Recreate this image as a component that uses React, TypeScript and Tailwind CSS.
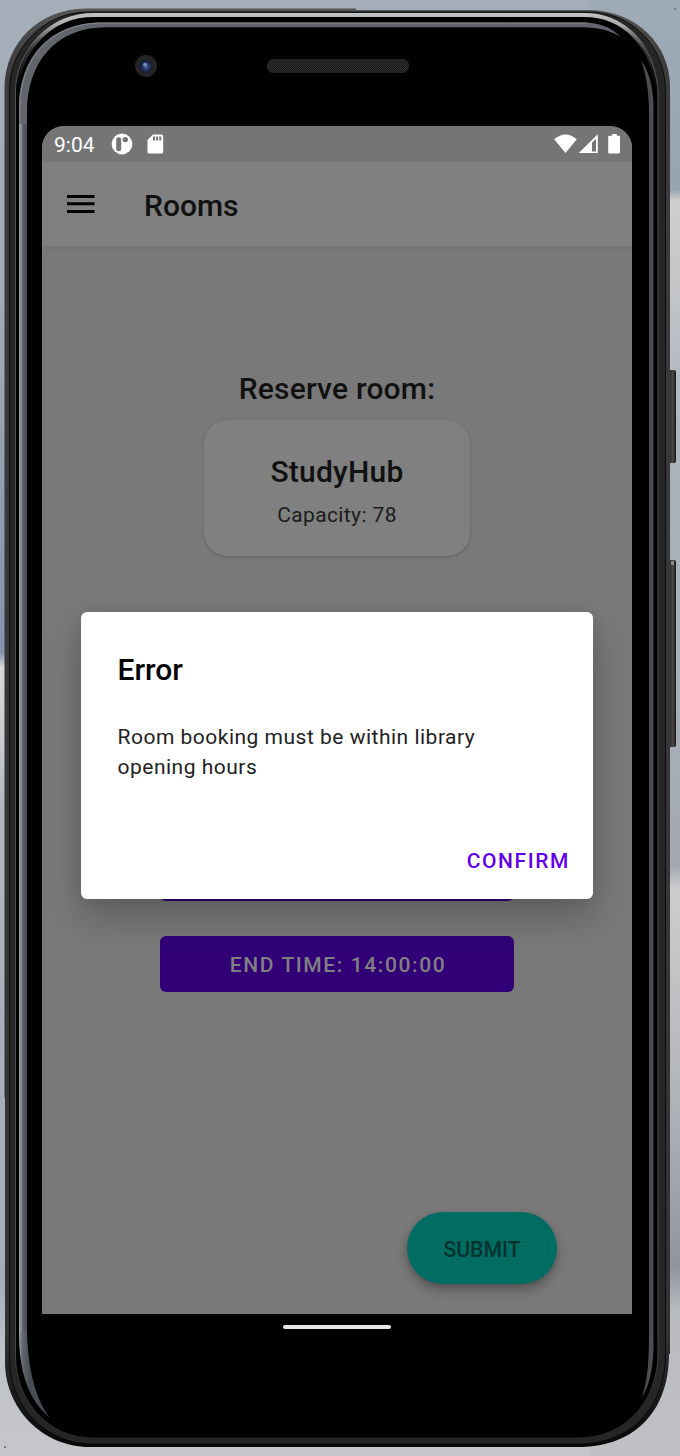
import React from "react";

function Backdrop() {
  return (
    <svg className="absolute inset-0" width="680" height="1456" viewBox="0 0 680 1456" aria-hidden="true">
      <defs>
        <linearGradient id="skyL" x1="0" y1="0" x2="0" y2="1">
          <stop offset="0" stopColor="#a4afba" />
          <stop offset="0.2" stopColor="#a1acb9" />
          <stop offset="0.35" stopColor="#8f9cb0" />
          <stop offset="0.448" stopColor="#8593ad" />
          <stop offset="0.458" stopColor="#d6d7d8" />
          <stop offset="0.51" stopColor="#c9cbce" />
          <stop offset="0.55" stopColor="#b3b8c0" />
          <stop offset="0.7" stopColor="#a9afba" />
          <stop offset="0.88" stopColor="#a5adba" />
          <stop offset="0.93" stopColor="#c0c3c8" />
          <stop offset="1" stopColor="#c4c6ca" />
        </linearGradient>
        <linearGradient id="skyR" x1="0" y1="0" x2="0" y2="1">
          <stop offset="0" stopColor="#9fabb7" />
          <stop offset="0.13" stopColor="#97a3b1" />
          <stop offset="0.138" stopColor="#cfcfce" />
          <stop offset="0.19" stopColor="#c5c7c8" />
          <stop offset="0.24" stopColor="#b8bec5" />
          <stop offset="0.33" stopColor="#a9b1ba" />
          <stop offset="0.45" stopColor="#a8b0bb" />
          <stop offset="0.595" stopColor="#a2a9b2" />
          <stop offset="0.61" stopColor="#cccdce" />
          <stop offset="0.68" stopColor="#c0c1c3" />
          <stop offset="0.76" stopColor="#afb3b8" />
          <stop offset="0.87" stopColor="#8f969f" />
          <stop offset="0.9" stopColor="#b8bbbf" />
          <stop offset="1" stopColor="#c0c1c4" />
        </linearGradient>
        <linearGradient id="rimFade" gradientUnits="userSpaceOnUse" x1="0" y1="12" x2="0" y2="120">
          <stop offset="0" stopColor="#c5c7c9" />
          <stop offset="0.12" stopColor="#aaa" />
          <stop offset="0.35" stopColor="#555" stopOpacity="0.6" />
          <stop offset="0.7" stopColor="#555" stopOpacity="0" />
        </linearGradient>
        <linearGradient id="innerRim" gradientUnits="userSpaceOnUse" x1="0" y1="12" x2="0" y2="1440">
          <stop offset="0" stopColor="#555658" />
          <stop offset="0.92" stopColor="#4c4d4f" />
          <stop offset="0.97" stopColor="#303030" />
          <stop offset="1" stopColor="#262626" />
        </linearGradient>
        <linearGradient id="edge" gradientUnits="userSpaceOnUse" x1="0" y1="8" x2="0" y2="1448">
          <stop offset="0" stopColor="#555" />
          <stop offset="0.04" stopColor="#3d3b3b" />
          <stop offset="0.92" stopColor="#343233" />
          <stop offset="0.97" stopColor="#171717" />
          <stop offset="1" stopColor="#060606" />
        </linearGradient>
        <linearGradient id="side" x1="0" y1="0" x2="1" y2="0">
          <stop offset="0" stopColor="#9da1a6" />
          <stop offset="0.3" stopColor="#858a90" />
          <stop offset="0.45" stopColor="#5c6269" />
          <stop offset="1" stopColor="#484e56" />
        </linearGradient>
        <linearGradient id="tail" gradientUnits="userSpaceOnUse" x1="19" y1="0" x2="30" y2="0">
          <stop offset="0" stopColor="#9da1a6" />
          <stop offset="0.3" stopColor="#646970" />
          <stop offset="1" stopColor="#484e56" />
        </linearGradient>
        <linearGradient id="key" x1="0" y1="0" x2="1" y2="0">
          <stop offset="0" stopColor="#181818" />
          <stop offset="0.6" stopColor="#4a4a4a" />
          <stop offset="1" stopColor="#151515" />
        </linearGradient>
        <radialGradient id="lens">
          <stop offset="0" stopColor="#5c70a4" />
          <stop offset="0.45" stopColor="#29396d" />
          <stop offset="1" stopColor="#10172f" />
        </radialGradient>
        <pattern id="mesh" width="2" height="2" patternUnits="userSpaceOnUse">
          <rect width="2" height="2" fill="#191b1b" />
          <rect width="1" height="1" fill="#303232" />
          <rect x="1" y="1" width="1" height="1" fill="#2a2c2c" />
        </pattern>
      </defs>
      <rect width="340" height="1456" fill="url(#skyL)" />
      <rect x="340" width="340" height="1456" fill="url(#skyR)" />
      <rect x="86" width="504" height="12" fill="#a4aeb9" />
      <rect x="86" y="1440" width="504" height="16" fill="#c6c7ca" />

      <rect x="668" y="370" width="8" height="93" rx="2" fill="url(#key)" />
      <rect x="668" y="560" width="8" height="187" rx="2" fill="url(#key)" />
      <rect x="671" y="561" width="3" height="4" fill="#888" />

      <path d="M86 8.5H356V10H590C638 11 670 46 670 86V1354H669C669 1408 638 1447 578 1447H90C42 1447 5 1408 5 1362V1098H4.5V88C5 42 40 8.5 86 8.5Z" fill="url(#edge)" />
      <path d="M88 12H588C634 12 665.5 48 665.5 92V1354C665.5 1404 634 1444 578 1444H92C46 1444 9.5 1406 9.5 1360V90C9.5 48 44 12 88 12Z" fill="#262627" stroke="#0b0b0b" />
      <path d="M92 14.5H584C628 14.5 658 52 658 96V1354C658 1398 628 1438 578 1438H92C50 1438 15.5 1402 15.5 1356V92C15.5 50 50 14.5 92 14.5Z" fill="#000" stroke="url(#innerRim)" />
      <path d="M17.5 90C19 50 50 15 94 15H584C624 15 654 46 656.5 90" fill="none" stroke="url(#rimFade)" strokeWidth="4" />

      <path d="M19 125V108C19 58 49 22.5 102 22.5H588Q608 24 621 37Q606 27.5 584 27.2H106C56 27.2 27 62 27 112V125Z" fill="#62656b" />
      <path d="M19.8 125V108C20 60 49 23 102 23H586" fill="none" stroke="#85898f" />
      <rect x="19" y="124" width="8" height="1209" fill="url(#side)" />
      <path d="M19 1332H27C28 1372 37 1402 50 1418C29 1400 19 1374 19 1332Z" fill="url(#tail)" />
      <path d="M641 61Q648 78 649 108V1330C649 1360 648 1379 642 1397Q652 1382 653.5 1350V104Q652 74 641 61Z" fill="#4c4d52" />

      <circle cx="146" cy="66" r="11" fill="#242424" />
      <circle cx="146" cy="66.5" r="6.5" fill="url(#lens)" />
      <circle cx="145" cy="64.5" r="1.7" fill="#8193bd" />
      <rect x="267.5" y="59.5" width="141" height="13" rx="5.5" fill="url(#mesh)" stroke="#202323" />
      <rect x="4" y="1446" width="2" height="2" fill="#777" />
      <rect x="674" y="8" width="2" height="2" fill="#777" />
    </svg>
  );
}

function StatusBar() {
  return (
    <div className="flex h-9 items-center bg-[#757575] pl-3 pr-[11px] text-white">
      <span className="w-[57px] pt-px text-[21px] leading-9">9:04</span>
      <svg width="22" height="22" viewBox="0 0 22 22">
        <circle cx="11" cy="11" r="10.4" fill="#fff" />
        <rect x="5.2" y="4.2" width="5" height="14" rx="2.3" fill="#757575" />
        <circle cx="14.3" cy="6.6" r="2.7" fill="#757575" />
      </svg>
      <svg width="17" height="20" viewBox="0 0 17 20" className="ml-3.5">
        <path d="M6 .5H14.5Q16.2.5 16.2 2V18Q16.2 19.5 14.5 19.5H2Q.5 19.5.5 18V6Z" fill="#fff" />
        <path d="M6 2.5h2v4H6zM9.1 2.5h2v4h-2zM12.2 2.5h2v4h-2z" fill="#757575" />
      </svg>
      <div className="flex-1" />
      <svg width="67" height="22" viewBox="0 0 67 22" fill="#fff">
        <path d="M.2 6.2Q11.5-3.4 22.8 6.2L11.5 20Z" />
        <path fillRule="evenodd" d="M43.8 1.2V20H24.8ZM38 9.8V18.4H42V5.8Z" />
        <path d="M58.2 1H62.8V2.8H64.6Q66 2.8 66 4.2V19Q66 20.6 64.6 20.6H55.6Q54.2 20.6 54.2 19V4.2Q54.2 2.8 55.6 2.8H58.2Z" />
      </svg>
    </div>
  );
}

function AppBar() {
  return (
    <header className="flex h-[84px] items-center bg-[#808080] pl-[25px]">
      <svg width="28" height="18" viewBox="0 0 28 18" className="shrink-0">
        <path d="M0 0h27.5v3H0zM0 7.3h27.5v3H0zM0 15h27.5v3H0z" fill="#000" />
      </svg>
      <h1 className="ml-[49px] mt-1 text-[30px] font-medium leading-10 text-[#111]">Rooms</h1>
    </header>
  );
}

function ErrorDialog() {
  return (
    <div
      role="alertdialog"
      className="absolute left-[39px] top-[486px] flex h-[287px] w-[512px] flex-col rounded-[6px] bg-white pl-[36.5px] pr-6 pt-[38px] shadow-[0_18px_36px_2px_rgba(0,0,0,0.2),0_2px_16px_rgba(0,0,0,0.08)]"
    >
      <h2 className="text-[30px] font-medium leading-10 text-black">Error</h2>
      <p className="mt-8 w-[400px] text-[21px] leading-[30px] tracking-[0.5px] text-[#222]">
        Room booking must be within library opening hours
      </p>
      <button className="-mr-[1px] mt-[64px] self-end text-[21px] font-medium leading-[30px] tracking-[1.6px] text-[#6200ee]">
        CONFIRM
      </button>
    </div>
  );
}

export default function App() {
  return (
    <div className="relative h-[1456px] w-[680px] overflow-hidden font-['Roboto',sans-serif]">
      <Backdrop />
      <div className="relative flex flex-col pl-[42px] pt-[126px]">
        <div className="relative flex h-[1188px] w-[590px] flex-col overflow-hidden rounded-t-[22px] bg-[#797979]">
          <StatusBar />
          <AppBar />
          <main className="flex flex-1 flex-col items-center bg-[linear-gradient(#747474,#797979_6px)] pt-[123px]">
            <h2 className="text-[30px] font-medium leading-10 tracking-[0.22px] text-[#111]">Reserve room:</h2>
            <section className="mt-[11px] flex h-[135.5px] w-[266px] flex-col items-center rounded-[23px] bg-[#808080] pt-8 shadow-[0_1px_3px_rgba(0,0,0,0.18),0_0_1px_rgba(0,0,0,0.14)]">
              <h3 className="text-[30px] font-medium leading-10 tracking-[0.22px] text-[#111]">StudyHub</h3>
              <p className="mt-2 text-[21px] leading-[30px] tracking-[0.38px] text-[#1b1b1b]">Capacity: 78</p>
            </section>
            <div className="mt-[289.5px] h-14 w-[354px] rounded-[6px] bg-[#310077]" />
            <button className="mt-[35px] h-14 w-[354px] rounded-[6px] bg-[#310077] pl-0.5 pt-[3px] text-[21px] font-medium tracking-[1.6px] text-[#808080]">
              END TIME: 14:00:00
            </button>
            <button className="mr-[75px] mt-[220px] h-[72px] w-[150px] self-end rounded-full bg-[#016d62] pt-[3px] text-[21.2px] font-medium text-[#00332f] shadow-[0_6px_12px_rgba(0,0,0,0.27),0_2px_5px_rgba(0,0,0,0.1)]">
              SUBMIT
            </button>
          </main>
          <ErrorDialog />
        </div>
        <div className="mt-[11px] flex w-[590px] justify-center">
          <div className="h-1 w-[108px] rounded-sm bg-[#e8e8e8]" />
        </div>
      </div>
    </div>
  );
}
